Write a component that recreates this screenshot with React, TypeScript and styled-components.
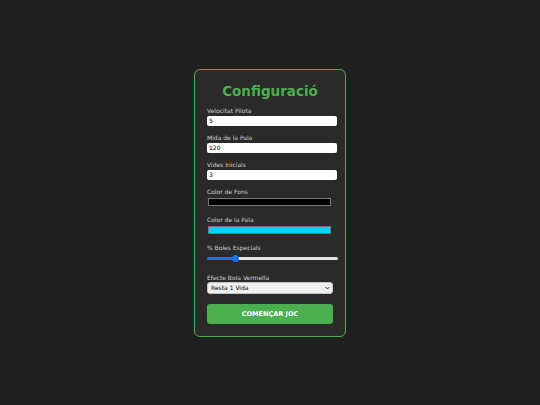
import { createGlobalStyle } from "styled-components";
import styled from "styled-components";

const GlobalStyle = createGlobalStyle`
  html, body {
    margin: 0;
    padding: 0;
    background: #202020;
  }
  body {
    font-family: "DejaVu Sans", Verdana, sans-serif;
  }
`;

export default function App() {
  return (
    <>
      <GlobalStyle />
      <Page>
        <Panel>
          <Title>Configuració</Title>

          <Field>
            <Label>Velocitat Pilota</Label>
            <TextInput type="number" defaultValue={5} />
          </Field>
          <Field>
            <Label>Mida de la Pala</Label>
            <TextInput type="number" defaultValue={120} />
          </Field>
          <Field>
            <Label>Vides Inicials</Label>
            <TextInput type="number" defaultValue={3} />
          </Field>

          <Field>
            <Label>Color de Fons</Label>
            <Swatch $color="#000000" />
          </Field>
          <Field>
            <Label>Color de la Pala</Label>
            <Swatch $color="#00d4ff" />
          </Field>

          <Field>
            <Label>% Boles Especials</Label>
            <Range type="range" min={0} max={100} defaultValue={20} />
          </Field>

          <Field>
            <Label $tight>Efecte Bola Vermella</Label>
            <SelectWrap>
              <Select defaultValue="1">
                <option value="1">Resta 1 Vida</option>
                <option value="2">Acaba el joc</option>
              </Select>
              <Chevron viewBox="0 0 8 6" aria-hidden>
                <path d="M1 1.5 L4 4.5 L7 1.5" />
              </Chevron>
            </SelectWrap>
          </Field>

          <StartBtn>COMENÇAR JOC</StartBtn>
        </Panel>
      </Page>
    </>
  );
}

const Page = styled.div`
  width: 100%;
  height: 100vh;
  display: flex;
  align-items: center;
  justify-content: center;
`;

const Panel = styled.div`
  width: 126px;
  padding: 12px;
  border: 1px solid #4caf50;
  border-radius: 6px;
  background: #2a2a2a;
  display: flex;
  flex-direction: column;
`;

const Title = styled.h1`
  margin: 1px 0 8px;
  text-align: center;
  font-size: 13.5px;
  line-height: 16px;
  font-weight: bold;
  color: #4caf50;
`;

const Field = styled.div`
  display: flex;
  flex-direction: column;
  margin-bottom: 8px;
`;

const Label = styled.label<{ $tight?: boolean }>`
  font-size: 6px;
  line-height: 7px;
  color: #d0d0d0;
  margin-bottom: ${(p) => (p.$tight ? "1px" : "2px")};
`;

const TextInput = styled.input`
  width: 100%;
  height: 10px;
  padding: 0 2px;
  border: none;
  border-radius: 2px;
  background: #ffffff;
  font-family: "DejaVu Sans", sans-serif;
  font-size: 6px;
  color: #000;
  outline: none;
  &::-webkit-inner-spin-button {
    display: none;
  }
`;

const Swatch = styled.div<{ $color: string }>`
  margin: 1px 2px 2px 1px;
  height: 6px;
  border: 1px solid #777;
  background: ${(p) => p.$color};
`;

const Range = styled.input`
  -webkit-appearance: none;
  appearance: none;
  width: 131px;
  height: 3px;
  margin: 4px 0 6px;
  border-radius: 2px;
  background: linear-gradient(to right, #1a73e8 0 23%, #e3e3e3 23% 100%);
  outline: none;
  &::-webkit-slider-thumb {
    -webkit-appearance: none;
    width: 7px;
    height: 7px;
    border-radius: 50%;
    background: #1a73e8;
  }
`;

const SelectWrap = styled.div`
  position: relative;
  display: flex;
`;

const Select = styled.select`
  -webkit-appearance: none;
  appearance: none;
  width: 100%;
  height: 12px;
  padding: 0 3px;
  border: 1px solid #c4c4c4;
  border-radius: 3px;
  background: #efefef;
  font-family: "DejaVu Sans", sans-serif;
  font-size: 6px;
  color: #000;
  outline: none;
`;

const Chevron = styled.svg`
  position: absolute;
  right: 3px;
  top: 4px;
  width: 5px;
  height: 4px;
  fill: none;
  stroke: #222;
  stroke-width: 1.6;
  pointer-events: none;
`;

const StartBtn = styled.button`
  margin-top: 2px;
  height: 20px;
  border: none;
  border-radius: 3px;
  background: #4caf50;
  color: #fff;
  font-family: "DejaVu Sans", sans-serif;
  font-size: 6.5px;
  font-weight: bold;
  cursor: pointer;
`;
